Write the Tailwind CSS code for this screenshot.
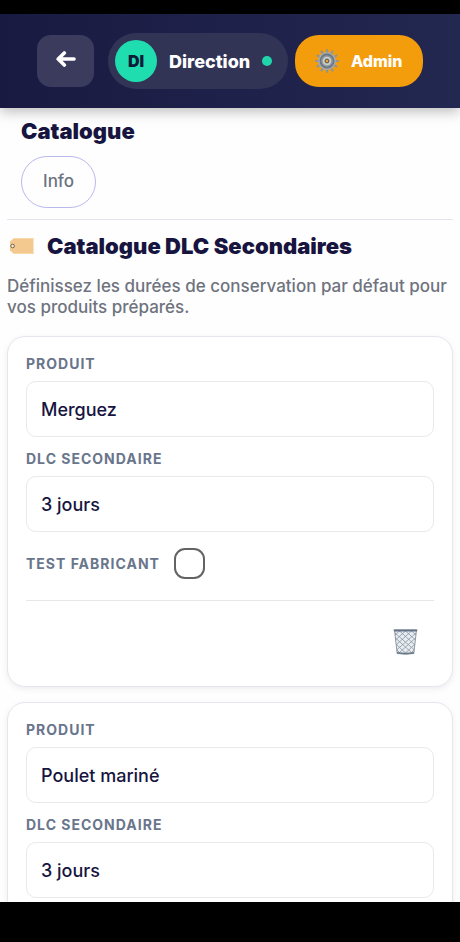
<!DOCTYPE html>
<html lang="fr">
<head>
<meta charset="utf-8">
<meta name="viewport" content="width=device-width, initial-scale=1">
<title>Catalogue DLC Secondaires</title>
<script src="https://cdn.jsdelivr.net/npm/@tailwindcss/browser@4"></script>
</head>
<body class="flex h-dvh flex-col overflow-hidden bg-black pt-[14px] pb-[40px] font-['Inter','Liberation_Sans',sans-serif] text-[#17153f]">
<header class="z-10 flex h-[94px] shrink-0 items-center justify-center bg-linear-to-r from-[#191a42] to-[#232850] shadow-[0_4px_12px_rgba(0,0,0,0.25)]">
  <button type="button" aria-label="Retour" class="mr-[14px] flex h-[52px] w-[57px] items-center justify-center rounded-[14px] bg-[#3a3b5d] text-white">
    <svg class="-mt-1 h-[18px] w-[20px]" viewBox="0 0 20 18" fill="none" stroke="currentColor" stroke-width="3.6" stroke-linecap="round" stroke-linejoin="round" aria-hidden="true"><path d="M18 9H3M8.300 3 2.200 9l6.100 6"/></svg>
  </button>
  <button type="button" class="mr-[7px] flex h-[56px] w-[180px] items-center rounded-full bg-[#323456] pl-[7px] text-white">
    <span class="flex size-[42px] items-center justify-center rounded-full bg-[#20ddb0] text-[16px] font-black text-[#0d1b3a]">DI</span>
    <span class="ml-[12px] text-[18px] font-extrabold">Direction</span>
    <span class="ml-auto mr-[16px] size-[10px] rounded-full bg-[#20d5ac]"></span>
  </button>
  <button type="button" class="flex h-[52px] w-[128px] items-center rounded-[24px] bg-[#f49d0c] pl-[20px] text-white">
    <svg class="size-[24px]" viewBox="0 0 24 24" aria-hidden="true">
      <g transform="translate(12 12)">
        <g stroke="#8f9498" stroke-width="2.2">
          <path d="M0-11.800V11.800M-11.800 0H11.800"/>
          <path d="M0-11.800V11.800M-11.800 0H11.800" transform="rotate(30)"/>
          <path d="M0-11.800V11.800M-11.800 0H11.800" transform="rotate(60)"/>
        </g>
        <circle r="9" fill="#a3a8ab"/>
        <circle r="6.600" fill="#8f999f" stroke="#6b7880" stroke-width="1.600"/>
        <circle r="3.600" fill="#c3c7ca" stroke="#c9cdd0" stroke-width="1.400"/>
        <circle r="1.900" fill="#f0a32a" stroke="#5b5148" stroke-width="1"/>
      </g>
    </svg>
    <span class="ml-[12px] text-[16px] font-extrabold">Admin</span>
  </button>
</header>

<main class="min-h-0 flex-1 overflow-hidden bg-[#fefefe] px-[7px]">
  <section class="border-b border-[#e2e4ee] px-[14px] pt-[10px] pb-[11px]">
    <h1 class="text-[22px] leading-[26px] font-black">Catalogue</h1>
    <button type="button" class="mt-[12px] h-[52px] rounded-full border border-[#b9b9ee] px-[21px] text-[17px] font-medium text-[#6b7280]">Info</button>
  </section>

  <h2 class="mt-[12px] flex items-center text-[22px] leading-[28px] font-black">
    <svg class="ml-[2px] mr-[13px] h-[16px] w-[25px]" viewBox="0 0 25 16" aria-hidden="true"><path d="M5 0H24.500V16H5L1 12.500V3.500Z" fill="#f3c990"/><path d="M5 0H24.500V1H5ZM5 15H24.500V16H5Z" fill="#f8d7a9"/><circle cx="3.600" cy="8" r="1.800" fill="#fff2d8" stroke="#76614a"/></svg>
    Catalogue DLC Secondaires
  </h2>
  <p class="mt-[16px] text-[17px] leading-[21px] font-medium text-[#6e737e]">Définissez les durées de conservation par défaut pour vos produits préparés.</p>

  <form class="mt-[18px] flex flex-col gap-[15px]">
    <article class="rounded-[18px] border border-[#e5e7ee] bg-white p-[18px] shadow-[0_2px_6px_rgba(20,20,60,0.07)]">
      <label for="product-1" class="block text-[14px] leading-[17px] font-bold tracking-[1px] text-[#69758b]">PRODUIT</label>
      <input id="product-1" type="text" value="Merguez" class="mt-[9px] block h-[56px] w-full rounded-[10px] border border-[#e7e9ec] bg-white px-[14px] text-[18px] font-medium">
      <label for="dlc-1" class="mt-[13px] block text-[14px] leading-[17px] font-bold tracking-[1px] text-[#69758b]">DLC SECONDAIRE</label>
      <input id="dlc-1" type="text" value="3 jours" class="mt-[9px] block h-[56px] w-full rounded-[10px] border border-[#e7e9ec] bg-white px-[14px] text-[18px] font-medium">
      <div class="mt-[16px] flex items-center gap-[14px]">
        <label for="test-1" class="text-[14px] leading-[17px] font-bold tracking-[1px] text-[#69758b]">TEST FABRICANT</label>
        <input id="test-1" type="checkbox" class="size-[31px] appearance-none rounded-[11px] border-2 border-[#636363] bg-white checked:bg-[#17153f]">
      </div>
      <div class="mt-[21px] flex justify-end border-t border-[#e5e7ea] pt-[14px]">
        <button type="button" aria-label="Supprimer" class="flex h-[53px] items-center px-[16px]">
          <svg class="h-[27px] w-[25px]" viewBox="0 0 25 27" fill="none" aria-hidden="true">
            <path d="M1.500 2H23.500L20.800 25.500Q12.500 27 4.200 25.500Z" fill="#e9edf1" stroke="#8e98a4"/>
            <path d="M2 7 7 2.500M2.500 12 13 2.500M3 17 19 2.500M3.500 22 23 5M6 25 22.500 10M12 25.500 22 16M17.500 25.500 21.500 21.500M23 7 18 2.500M22.500 12 12 2.500M22 17 6 2.500M21.500 22 2 5M19 25 2.500 10M13 25.500 3 16M7.500 25.500 3.500 21.500" stroke="#8994a2" stroke-width=".8"/>
            <path d="M.5 1.500H24.500L24 3.500H1Z" fill="#667386"/>
            <path d="M4 24.800Q12.500 26.300 21 24.800" stroke="#6b7887" stroke-width="1.600"/>
          </svg>
        </button>
      </div>
    </article>

    <article class="rounded-[18px] border border-[#e5e7ee] bg-white p-[18px] shadow-[0_2px_6px_rgba(20,20,60,0.07)]">
      <label for="product-2" class="block text-[14px] leading-[17px] font-bold tracking-[1px] text-[#69758b]">PRODUIT</label>
      <input id="product-2" type="text" value="Poulet mariné" class="mt-[9px] block h-[56px] w-full rounded-[10px] border border-[#e7e9ec] bg-white px-[14px] text-[18px] font-medium">
      <label for="dlc-2" class="mt-[13px] block text-[14px] leading-[17px] font-bold tracking-[1px] text-[#69758b]">DLC SECONDAIRE</label>
      <input id="dlc-2" type="text" value="3 jours" class="mt-[9px] block h-[56px] w-full rounded-[10px] border border-[#e7e9ec] bg-white px-[14px] text-[18px] font-medium">
    </article>
  </form>
</main>
</body>
</html>
